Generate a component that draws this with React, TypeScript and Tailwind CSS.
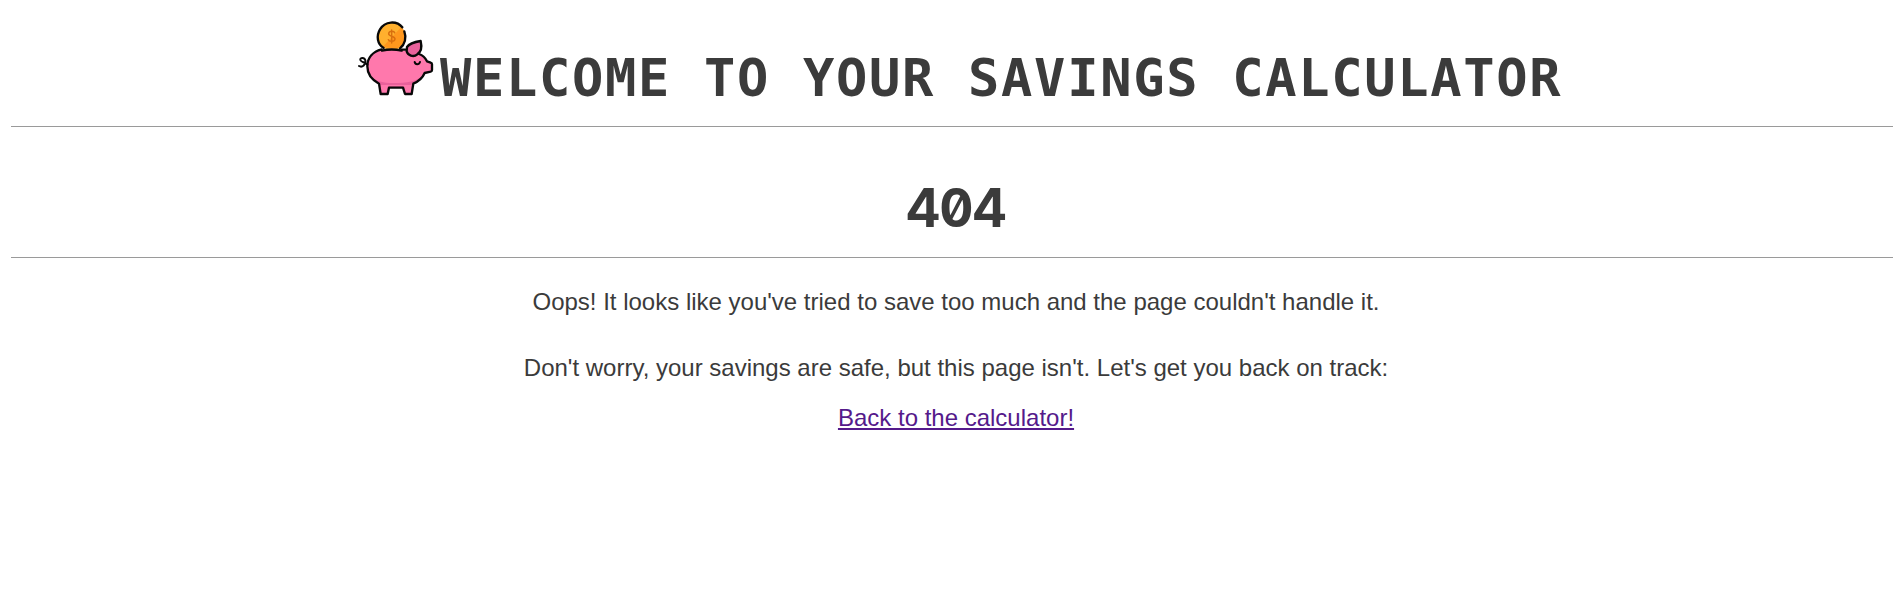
function PiggyBank() {
  return (
    <svg viewBox="24 18 228 228" className="h-[76px] w-[76px] shrink-0" strokeLinecap="round" strokeLinejoin="round" aria-hidden="true">
      <circle cx="125" cy="68" r="41" fill="#ffb02e" />
      <path d="M98 99L154 39A41 41 0 0 1 150 101Q140 106 98 99Z" fill="#ff971d" />
      <path d="M134 56C132 50 117 50 116 59C116 68 135 65 135 75C134 84 117 84 115 77M125 48V87" fill="none" stroke="#d96f0e" strokeWidth="4.5" />
      <path d="M96 107C68 113 52 132 52 157C52 179 66 198 87 209L92 240H113L117 221H159L165 240H185L190 209C206 202 218 191 224 177L246 171V148L230 142C225 132 218 126 207 119L172 112L152 107Q125 101 96 107Z" fill="#ff78ac" />
      <path d="M62 188C78 201 100 207 130 207C172 207 200 203 221 182C214 195 203 204 190 209L185 240H165L159 221H117L113 240H92L87 209C76 203 68 197 62 188Z" fill="#e9619b" />
      <path d="M91 213L94 237H109L114 217H162L168 237H182L186 213Z" fill="#ff78ac" />
      <path d="M95 106C68 113 52 132 52 157C52 179 66 198 87 209L92 240H113L117 221H159L165 240H185L190 209C206 202 218 191 224 177L242 173Q246 172 246 168V151Q246 147 242 146L231 142C226 131 216 123 207 120M155 107H166" fill="none" stroke="#080808" strokeWidth="7" />
      <path d="M96 110Q125 103 155 110" fill="none" stroke="#080808" strokeWidth="7" />
      <path d="M101 102C82 91 78 66 90 46C105 21 140 19 157 40M163 52C170 71 165 91 150 103" fill="none" stroke="#080808" strokeWidth="7" />
      <path d="M171 99C179 87 193 84 212 81C216 98 214 113 202 121C190 131 173 124 170 112Z" fill="#e9619b" stroke="#080808" strokeWidth="7" />
      <path d="M194 144C196 153 207 153 210 144" fill="none" stroke="#080808" strokeWidth="6" />
      <path d="M27 156C37 162 48 151 46 139C43 129 30 131 31 138C34 146 44 143 52 152" fill="none" stroke="#080808" strokeWidth="6" />
    </svg>
  );
}

export default function App() {
  return (
    <div className="h-[589px] overflow-hidden bg-white pl-[11px] font-['Liberation_Sans',Arial,sans-serif] text-[#3b3b3b]">
      <div className="w-[1890px]">
        <header className="flex h-[127px] items-start border-b border-[#9a9a9a] pt-5 pl-[347px]">
          <PiggyBank />
          <h1 className="mt-[25px] ml-[6px] whitespace-pre font-['DejaVu_Sans_Mono',monospace] text-[52px] leading-[66px] font-bold tracking-[1.7px]">WELCOME TO YOUR SAVINGS CALCULATOR</h1>
        </header>
        <main>
          <h2 className="h-[131px] border-b border-[#9a9a9a] pt-[48px] text-center font-['Inter',sans-serif] text-[53px] leading-[66px] font-bold tracking-[-1px] [font-feature-settings:'zero','tnum']">404</h2>
          <div className="flex flex-col items-center pt-[30px] text-2xl leading-[28px]">
            <p>Oops! It looks like you've tried to save too much and the page couldn't handle it.</p>
            <p className="mt-[38px]">Don't worry, your savings are safe, but this page isn't. Let's get you back on track:</p>
            <a href="#" className="mt-[22px] text-[#551a8b] underline">Back to the calculator!</a>
          </div>
        </main>
      </div>
    </div>
  );
}
